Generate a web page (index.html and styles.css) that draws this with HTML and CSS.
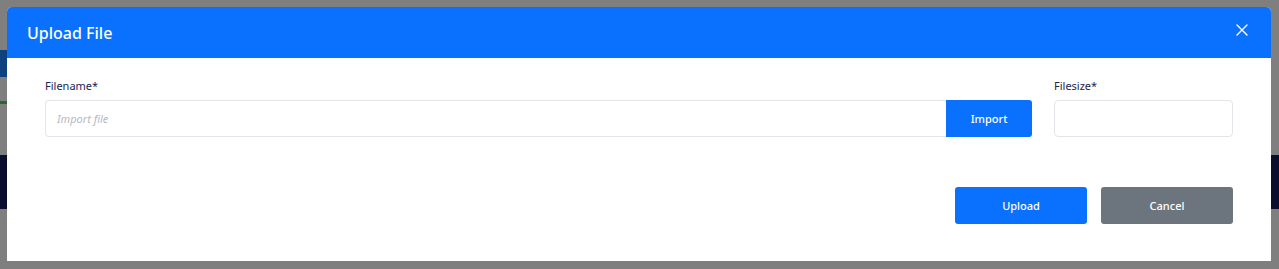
FILE: index.html
```html
<!DOCTYPE html>
<html lang="en">
<head>
<meta charset="utf-8">
<title>Upload File</title>
<link rel="stylesheet" href="styles.css">
</head>
<body>
<div class="page">
  <div class="page-top"></div>
  <div class="page-nav"></div>
  <div class="page-gap1"></div>
  <div class="page-green"></div>
  <div class="page-gap2"></div>
  <div class="page-band"></div>
</div>
<div class="backdrop">
  <div class="modal">
    <div class="modal-header">
      <h1 class="modal-title">Upload File</h1>
      <button class="close-btn" aria-label="Close">
        <svg width="12" height="12" viewBox="0 0 12 12"><path d="M1 1 L11 11 M11 1 L1 11" stroke="#fff" stroke-width="1.4" fill="none" stroke-linecap="round"/></svg>
      </button>
    </div>
    <div class="modal-body">
      <div class="form-row">
        <div class="field">
          <label class="label">Filename*</label>
          <div class="input-group">
            <input class="input" type="text" placeholder="Import file">
            <button class="btn btn-primary btn-import">Import</button>
          </div>
        </div>
        <div class="field">
          <label class="label">Filesize*</label>
          <input class="input input-size" type="text">
        </div>
      </div>
      <div class="footer">
        <button class="btn btn-primary btn-wide">Upload</button>
        <button class="btn btn-secondary btn-wide">Cancel</button>
      </div>
    </div>
  </div>
</div>
</body>
</html>
```
FILE: styles.css
```css
* { box-sizing: border-box; }
html, body { margin: 0; padding: 0; }
body {
  font-family: "Noto Sans", "Open Sans", sans-serif;
  background: #ffffff;
  width: 1279px;
  height: 269px;
  overflow: hidden;
}
.page { height: 269px; }
.page-top { height: 50px; }
.page-nav { height: 27px; background: #1e82ff; width: 40px; }
.page-gap1 { height: 24px; }
.page-green { height: 3px; background: #4fd44f; width: 40px; }
.page-gap2 { height: 51px; }
.page-band { height: 54px; background: #141a5c; }

.backdrop {
  position: fixed;
  inset: 0;
  background: rgba(0, 0, 0, 0.5);
  padding: 7px 8px 0 7px;
}
.modal {
  width: 1264px;
  background: #ffffff;
  border-radius: 5px 5px 0 0;
}
.modal-header {
  height: 51px;
  background: #0a70fe;
  border-radius: 5px 5px 0 0;
  display: flex;
  align-items: center;
  justify-content: space-between;
  padding: 0 22px 0 20px;
}
.modal-title {
  margin: 0;
  color: #ffffff;
  font-size: 16px;
  font-weight: 500;
}
.close-btn {
  background: none;
  border: 0;
  padding: 0;
  width: 14px;
  height: 14px;
  display: flex;
  align-items: center;
  justify-content: center;
  margin-top: -6px;
}
.modal-body {
  padding: 20px 38px 37px 38px;
}
.form-row {
  display: grid;
  grid-template-columns: 1fr 179px;
  column-gap: 22px;
}
.field { display: flex; flex-direction: column; }
.label {
  font-size: 11px;
  line-height: 16px;
  font-weight: 400;
  color: #1b2550;
  margin-bottom: 6px;
}
.input-group { display: flex; }
.input {
  height: 37px;
  border: 1px solid #e3e5ea;
  border-radius: 4px;
  font-family: inherit;
  font-size: 11px;
  padding: 0 11px;
  outline: none;
  background: #fff;
}
.input::placeholder { color: #b4b8c4; font-style: italic; }
.input-group .input {
  flex: 1;
  border-radius: 4px 0 0 4px;
  border-right: 0;
}
.input-size { width: 100%; }
.btn {
  font-family: inherit;
  font-size: 11px;
  font-weight: 500;
  color: #ffffff;
  border: 0;
  border-radius: 3px;
  height: 37px;
  cursor: pointer;
}
.btn-primary { background: #0a70fe; }
.btn-secondary { background: #6c757d; }
.btn-import {
  width: 86px;
  border-radius: 0 3px 3px 0;
}
.footer {
  display: flex;
  justify-content: flex-end;
  gap: 14px;
  margin-top: 50px;
}
.btn-wide { width: 132px; }
```
